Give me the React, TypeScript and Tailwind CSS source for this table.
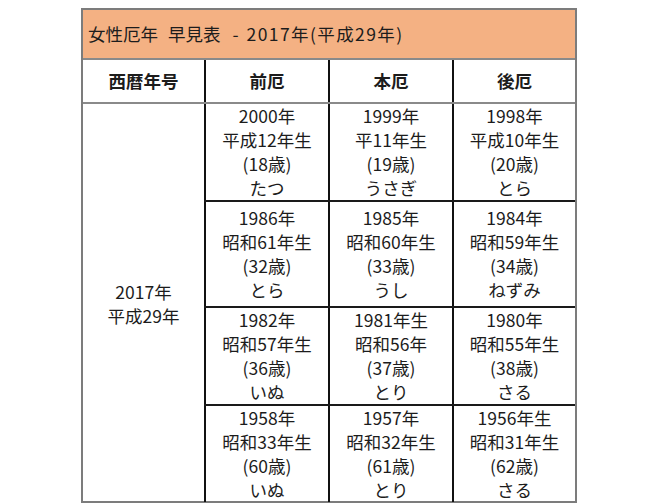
import React from "react";

type Cell = string[];

const rows: { h: string; cells: Cell[] }[] = [
  {
    h: "h-[96px]",
    cells: [
      ["2000年", "平成12年生", "(18歳)", "たつ"],
      ["1999年", "平11年生", "(19歳)", "うさぎ"],
      ["1998年", "平成10年生", "(20歳)", "とら"],
    ],
  },
  {
    h: "h-[106px]",
    cells: [
      ["1986年", "昭和61年生", "(32歳)", "とら"],
      ["1985年", "昭和60年生", "(33歳)", "うし"],
      ["1984年", "昭和59年生", "(34歳)", "ねずみ"],
    ],
  },
  {
    h: "h-[98px]",
    cells: [
      ["1982年", "昭和57年生", "(36歳)", "いぬ"],
      ["1981年生", "昭和56年", "(37歳)", "とり"],
      ["1980年", "昭和55年生", "(38歳)", "さる"],
    ],
  },
  {
    h: "h-[97px]",
    cells: [
      ["1958年", "昭和33年生", "(60歳)", "いぬ"],
      ["1957年", "昭和32年生", "(61歳)", "とり"],
      ["1956年生", "昭和31年生", "(62歳)", "さる"],
    ],
  },
];

export default function App() {
  return (
    <div
      className="w-[670px] h-[503px] bg-white overflow-hidden text-[#1c1c1c] text-[17.5px] leading-[24px]"
      style={{ fontFamily: '"Noto Sans CJK JP", "Noto Sans", sans-serif' }}
    >
      <div className="ml-[81px] mt-[8px] w-[496px] border-2 border-[#7c7c7c]">
        <div className="h-[50px] bg-[#f4b183] border-b-2 border-[#8a8a8a] flex items-center pl-[5px] whitespace-nowrap">
          <span>女性厄年</span>
          <span className="ml-[10px]">早見表</span>
          <span className="ml-[12px]">-</span>
          <span className="ml-[8px] tracking-[1.4px]">2017年(平成29年)</span>
        </div>
        <div className="grid grid-cols-[121px_124px_124px_123px] h-[44px] border-b-2 border-[#8a8a8a] font-bold">
          <div className="flex items-center justify-center">西暦年号</div>
          <div className="flex items-center justify-center border-l-2 border-[#111]">前厄</div>
          <div className="flex items-center justify-center border-l-2 border-[#111]">本厄</div>
          <div className="flex items-center justify-center border-l-2 border-[#111]">後厄</div>
        </div>
        <div className="grid grid-cols-[121px_371px]">
          <div className="flex flex-col items-center justify-center pt-[2px]">
            <div>2017年</div>
            <div>平成29年</div>
          </div>
          <div className="flex flex-col">
            {rows.map((r, i) => (
              <div
                key={i}
                className={`grid grid-cols-[124px_124px_123px] ${r.h} ${i > 0 ? "border-t-2 border-[#1a1a1a]" : ""}`}
              >
                {r.cells.map((c, j) => (
                  <div
                    key={j}
                    className="flex flex-col items-center justify-center border-l-2 border-[#111]"
                  >
                    {c.map((t, k) => (
                      <div key={k} className="whitespace-nowrap">
                        {t}
                      </div>
                    ))}
                  </div>
                ))}
              </div>
            ))}
          </div>
        </div>
      </div>
    </div>
  );
}
